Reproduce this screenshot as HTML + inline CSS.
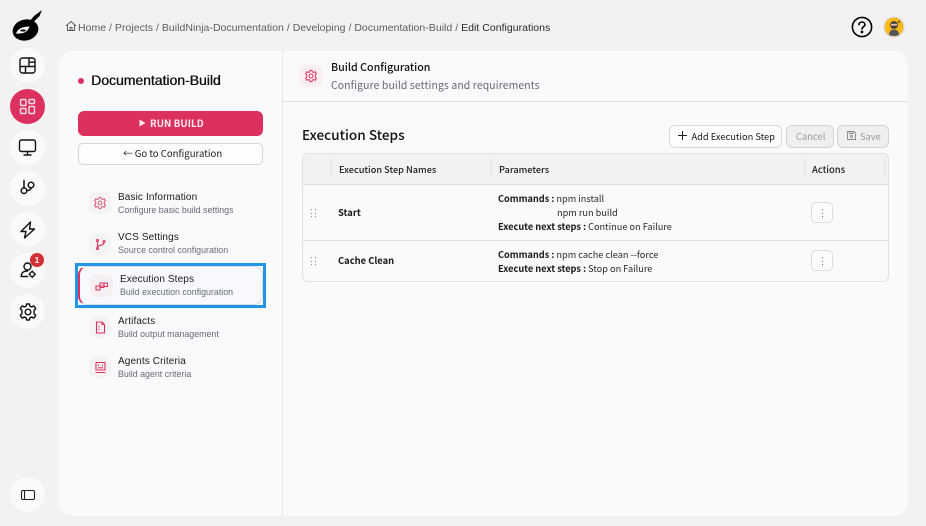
<!DOCTYPE html>
<html><head><meta charset="utf-8"><style>
*{box-sizing:border-box}
html,body{margin:0;padding:0}
body{width:926px;height:526px;background:#f3f1f2;position:relative;overflow:hidden;font-family:"Liberation Sans",sans-serif;color:#111}
.a{position:absolute;white-space:nowrap}
.n{font-family:"Noto Sans CJK SC","Liberation Sans",sans-serif}
.c{position:absolute;left:10px;width:35px;height:35px;border-radius:50%;background:#fbfafb;display:flex;align-items:center;justify-content:center}
.c svg{fill:none;stroke:#111;stroke-width:1.4;stroke-linecap:round;stroke-linejoin:round}
.ic{position:absolute;left:89px;width:22px;height:22px;border-radius:7px;background:#f5f2f4;display:flex;align-items:center;justify-content:center}
.ic svg{fill:none;stroke:#dc305e;stroke-width:1.1;stroke-linecap:round;stroke-linejoin:round}
.t{font-size:10px;color:#1a1a1a;letter-spacing:.12px}
.s{font-size:8.85px;color:#666b74}
.h{font-size:9.2px;color:#1c1c1c;font-weight:500;line-height:13px}
.r{font-size:9.2px;color:#2a2a2a;line-height:13px}
.r b{font-weight:700;color:#1a1a1a}
.vl{position:absolute;width:1px;background:#e4e2e3}
.more{position:absolute;left:811px;width:22px;height:21px;border:1px solid #dcdcdf;border-radius:5px;background:#fbfbfd}
.more i{position:absolute;left:9.5px;width:1.3px;height:1.3px;background:#666}
.dr i{position:absolute;width:1.2px;height:1.2px;background:#888}
</style></head><body>

<svg class="a" style="left:11px;top:8px" width="32" height="34" viewBox="0 0 32 34">
<path d="M18 14 L23 8 L31 2 L28.500 8 L22 14.500Z" fill="#000"/>
<ellipse cx="14.500" cy="22" rx="13" ry="10.500" fill="#000" transform="rotate(-15 14.500 22)"/>
<path d="M5 25.500 Q7.500 18.500 18.500 18.500 Q16 26.500 5 25.500Z" fill="#fff"/>
<ellipse cx="12" cy="22.500" rx="3" ry="1" fill="#000"/>
</svg>

<div class="c" style="top:48px"><svg width="19" height="19" viewBox="0 0 19 19"><rect x="2" y="2" width="15" height="15" rx="2.5"/><path d="M2 10.500H17M11 2V10.500M7.500 10.500V17M11 6.200H17"/></svg></div>
<div class="c" style="top:89px;background:#dc305e"><svg width="19" height="19" viewBox="0 0 19 19" style="stroke:#fbdfe7"><rect x="2.500" y="2.500" width="5.500" height="6" rx="1"/><rect x="11" y="2.500" width="5.500" height="4" rx="1"/><rect x="2.500" y="11.500" width="5.500" height="5" rx="1"/><rect x="11" y="9.500" width="5.500" height="7" rx="1"/></svg></div>
<div class="c" style="top:130px"><svg width="19" height="19" viewBox="0 0 19 19"><rect x="1.500" y="2" width="16" height="11.500" rx="2"/><path d="M9.500 13.500V17M6 17H13"/></svg></div>
<div class="c" style="top:171px"><svg width="19" height="19" viewBox="0 0 19 19" style="stroke-width:1.500"><circle cx="6" cy="11.700" r="2.800"/><circle cx="13" cy="6" r="2.800"/><path d="M6 8.900V1.500M13 8.800C13 11 10.500 11.500 8.800 11.700"/></svg></div>
<div class="c" style="top:212px"><svg width="20" height="20" viewBox="0 0 20 20"><path d="M12.500 2L3 11.500H8L6.500 18L16.500 9H11.500L12.500 2Z"/></svg></div>
<div class="c" style="top:253px"><svg width="20" height="20" viewBox="0 0 20 20"><circle cx="9.500" cy="5.500" r="3.500"/><path d="M3.200 15.500C3.200 12 5.500 10 9.500 10M3.200 15.500H9.500"/><circle cx="14.200" cy="13.200" r="2.300"/><path d="M14.200 10V10.700M14.200 15.800V16.400M11 13.200H11.700M16.800 13.200H17.400"/></svg></div>
<div class="a" style="left:30px;top:253px;width:14px;height:14px;border-radius:50%;background:#d32f35;color:#fff;font-size:8.500px;font-weight:700;text-align:center;line-height:14px">1</div>
<div class="c" style="top:294px"><svg width="20" height="20" viewBox="0 0 20 20"><circle cx="10" cy="10" r="2.800"/><path d="M8.600 2H11.400L11.900 4.200L13.800 5L15.800 3.800L17.800 6.600L16.100 8.100V11.900L17.800 13.400L15.800 16.200L13.800 15L11.900 15.800L11.400 18H8.600L8.100 15.800L6.200 15L4.200 16.200L2.200 13.400L3.900 11.900V8.100L2.200 6.600L4.200 3.800L6.200 5L8.100 4.200Z"/></svg></div>
<div class="c" style="top:477px"><svg width="16" height="16" viewBox="0 0 16 16" style="stroke-width:1.100;stroke:#222"><rect x="1.500" y="3.500" width="13" height="9" rx="1.500"/><path d="M4.500 3.500V12.500"/></svg></div>

<svg class="a" style="left:65px;top:20px" width="12" height="12" viewBox="0 0 12 12" fill="none" stroke="#555" stroke-width=".9"><path d="M1 6L6 1.500L11 6M2.500 5V10.500H9.500V5M5 10.500V7.500H7V10.500"/></svg>
<div class="a" style="left:78px;top:21px;font-size:10.500px;line-height:14px;color:#5c5c60;letter-spacing:.025px">Home / Projects / BuildNinja-Documentation / Developing / Documentation-Build / <span style="color:#2a2a2a">Edit Configurations</span></div>

<svg class="a" style="left:851px;top:16px" width="22" height="22" viewBox="0 0 22 22" fill="none" stroke="#000" stroke-width="1.600"><circle cx="11" cy="11" r="9.600"/><path d="M8 8.700C8 7 9.400 6 11 6S14 7 14 8.600C14 10.600 11 10.800 11 13" stroke-linecap="round"/><circle cx="11" cy="16" r=".6" fill="#000"/></svg>
<svg class="a" style="left:883px;top:16px" width="22" height="22" viewBox="0 0 22 22"><circle cx="11" cy="11" r="10.500" fill="#d9d6d2"/><circle cx="11" cy="11" r="9.300" fill="#fcb813"/><path d="M6 19C6.200 15 8.500 13.500 11 13.500S15.800 15 16 19C14 20.300 8 20.300 6 19Z" fill="#54565c"/><circle cx="11" cy="9" r="3.900" fill="#3c3d42"/><rect x="8" y="7.800" width="6" height="1.900" fill="#f3b9a0"/><path d="M14 6L17 4.500L16.500 7Z" fill="#3c3d42"/></svg>

<div class="a" style="left:59px;top:51px;width:849px;height:465px;border-radius:14px;background:#fafafc"></div>
<div class="a" style="left:282px;top:51px;width:1px;height:465px;background:#e6e5e7"></div>
<div class="a" style="left:283px;top:101px;width:625px;height:1px;background:#dfdfe1"></div>

<div class="a" style="left:78px;top:78px;width:6px;height:6px;border-radius:50%;background:#dc305e"></div>
<div class="a" style="left:91px;top:72px;font-size:14px;line-height:17px;font-weight:400;color:#111;letter-spacing:-.02px;text-shadow:.4px 0 0 #111">Documentation-Build</div>

<div class="a" style="left:78px;top:111px;width:185px;height:25px;border-radius:6px;background:#dc305e"></div>
<svg class="a" style="left:139px;top:119px" width="7" height="8"><path d="M0.500 0.500L6.500 4L0.500 7.500Z" fill="#fbe9ee"/></svg>
<div class="a n" style="left:150px;top:116px;font-size:9.700px;line-height:14px;font-weight:700;color:#fbeef2;letter-spacing:.1px">RUN BUILD</div>
<div class="a" style="left:78px;top:143px;width:185px;height:22px;border-radius:5px;background:#fdfdfe;border:1px solid #d6d6d8"></div>
<div class="a n" style="left:123px;top:146px;font-size:9.600px;line-height:14px;color:#1a1a1a">← Go to Configuration</div>

<div class="ic" style="top:192px"><svg width="14" height="14" viewBox="0 0 20 20"><circle cx="10" cy="10" r="2.800"/><path d="M8.600 2H11.400L11.900 4.200L13.800 5L15.800 3.800L17.800 6.600L16.100 8.100V11.900L17.800 13.400L15.800 16.200L13.800 15L11.900 15.800L11.400 18H8.600L8.100 15.800L6.200 15L4.200 16.200L2.200 13.400L3.900 11.900V8.100L2.200 6.600L4.200 3.800L6.200 5L8.100 4.200Z"/></svg></div>
<div class="a t" style="left:118px;top:191px;line-height:13px">Basic Information</div>
<div class="a s" style="left:118px;top:204px;line-height:12px">Configure basic build settings</div>

<div class="ic" style="top:233px"><svg width="13" height="13" viewBox="0 0 13 13"><circle cx="3.500" cy="2.500" r="1"/><circle cx="3.500" cy="10.500" r="1"/><circle cx="10" cy="3.500" r="1"/><path d="M3.500 3.500V9.500M10 4.500C10 7 6 7 3.500 8.500"/></svg></div>
<div class="a t" style="left:118px;top:231px;line-height:13px">VCS Settings</div>
<div class="a s" style="left:118px;top:244px;line-height:12px">Source control configuration</div>

<div class="a" style="left:75px;top:263px;width:191px;height:45px;border:3px solid #2196e8"></div>
<div class="a" style="left:78px;top:266px;width:185px;height:39px;border-radius:9px;background:#f8f9fc;border:1px solid #dcdde3;border-left:2px solid #dc305e"></div>
<div class="ic" style="left:90px;top:274px;width:23px;height:23px;background:#f6eff3"><svg width="13" height="13" viewBox="0 0 13 13"><path d="M1 7H5V11H1ZM5 7H9V4H5ZM5 7V4M9 4H12.500V7.500H9V4M5 8.500H9"/></svg></div>
<div class="a t" style="left:120px;top:273px;line-height:13px">Execution Steps</div>
<div class="a s" style="left:120px;top:286px;line-height:12px">Build execution configuration</div>

<div class="ic" style="top:316px"><svg width="13" height="13" viewBox="0 0 13 13"><path d="M2.500 1H8L10.500 3.500V12H2.500ZM8 1V3.500H10.500M5 5V5.800M5 8V8.800"/></svg></div>
<div class="a t" style="left:118px;top:315px;line-height:13px">Artifacts</div>
<div class="a s" style="left:118px;top:328px;line-height:12px">Build output management</div>

<div class="ic" style="top:356px"><svg width="13" height="13" viewBox="0 0 13 13"><path d="M2 1.500H11V9H2ZM2 11.500H11M4.500 4V4.600M8.500 4V4.600M4.500 6.800H8.500"/></svg></div>
<div class="a t" style="left:118px;top:355px;line-height:13px">Agents Criteria</div>
<div class="a s" style="left:118px;top:368px;line-height:12px">Build agent criteria</div>

<div class="a" style="left:299px;top:65px;width:23px;height:22px;border-radius:7px;background:#faeef2;display:flex;align-items:center;justify-content:center"><svg width="14" height="14" viewBox="0 0 20 20" fill="none" stroke="#dc305e" stroke-width="1.400"><circle cx="10" cy="10" r="2.800"/><path d="M8.600 2H11.400L11.900 4.200L13.800 5L15.800 3.800L17.800 6.600L16.100 8.100V11.900L17.800 13.400L15.800 16.200L13.800 15L11.900 15.800L11.400 18H8.600L8.100 15.800L6.200 15L4.200 16.200L2.200 13.400L3.900 11.900V8.100L2.200 6.600L4.200 3.800L6.200 5L8.100 4.200Z"/></svg></div>
<div class="a n" style="left:331px;top:60px;font-size:10.700px;line-height:15px;font-weight:500;color:#111">Build Configuration</div>
<div class="a n" style="left:331px;top:78px;font-size:10.450px;line-height:15px;color:#646870;letter-spacing:.1px">Configure build settings and requirements</div>

<div class="a n" style="left:302px;top:125px;font-size:13.600px;line-height:18px;font-weight:500;color:#111">Execution Steps</div>

<div class="a" style="left:669px;top:125px;width:113px;height:23px;border:1px solid #d9d9dc;border-radius:6px;background:#fdfdfe"></div>
<svg class="a" style="left:678px;top:131px" width="9" height="9"><path d="M4.500 0V9M0 4.500H9" stroke="#222" stroke-width="1"/></svg>
<div class="a n" style="left:691.500px;top:129px;font-size:9.300px;line-height:15px;color:#1a1a1a">Add Execution Step</div>
<div class="a" style="left:786px;top:125px;width:48px;height:23px;border:1px solid #d2d3d5;border-radius:6px;background:#eeeff0"></div>
<div class="a n" style="left:796px;top:129px;font-size:9.400px;line-height:15px;color:#999b9e">Cancel</div>
<div class="a" style="left:837px;top:125px;width:52px;height:23px;border:1px solid #d2d3d5;border-radius:6px;background:#eeeff0"></div>
<svg class="a" style="left:847px;top:131px" width="9" height="9" viewBox="0 0 9 9" fill="none" stroke="#888" stroke-width=".9"><path d="M.5.500H7L8.500 2V8.500H.5ZM2.500.5V2.500H6V.5"/><circle cx="4.500" cy="5.500" r="1.100"/></svg>
<div class="a n" style="left:860px;top:129px;font-size:9.300px;line-height:15px;color:#999b9e">Save</div>

<div class="a" style="left:302px;top:153px;width:587px;height:129px;border:1px solid #e0e0e2;border-radius:6px;background:#fafafc;overflow:hidden">
 <div class="a" style="left:0;top:0;width:585px;height:31px;background:#f3f1f2;border-bottom:1px solid #dfdfe1"></div>
 <div class="a" style="left:0;top:86px;width:585px;height:1px;background:#e2e2e4"></div>
</div>
<div class="vl" style="left:331px;top:159px;height:19px"></div>
<div class="vl" style="left:491px;top:159px;height:19px"></div>
<div class="vl" style="left:804px;top:159px;height:19px"></div>
<div class="vl" style="left:884px;top:159px;height:19px"></div>
<div class="a n h" style="left:339px;top:163px">Execution Step Names</div>
<div class="a n h" style="left:499px;top:163px">Parameters</div>
<div class="a n h" style="left:812px;top:163px;font-size:9.400px">Actions</div>

<div class="a dr" style="left:311px;top:209px;width:8px;height:9px"><i style="left:0;top:0"></i><i style="left:4px;top:0"></i><i style="left:0;top:3.500px"></i><i style="left:4px;top:3.500px"></i><i style="left:0;top:7px"></i><i style="left:4px;top:7px"></i></div>
<div class="a dr" style="left:311px;top:257px;width:8px;height:9px"><i style="left:0;top:0"></i><i style="left:4px;top:0"></i><i style="left:0;top:3.500px"></i><i style="left:4px;top:3.500px"></i><i style="left:0;top:7px"></i><i style="left:4px;top:7px"></i></div>

<div class="a n" style="left:338px;top:206px;font-size:9.400px;line-height:13px;font-weight:700;color:#1a1a1a">Start</div>
<div class="a n" style="left:338px;top:254px;font-size:9.400px;line-height:13px;font-weight:700;color:#1a1a1a">Cache Clean</div>

<div class="a n r" style="left:498px;top:192px"><b>Commands :</b> npm install</div>
<div class="a n r" style="left:557px;top:206px">npm run build</div>
<div class="a n r" style="left:498px;top:220px"><b>Execute next steps :</b> Continue on Failure</div>
<div class="a n r" style="left:498px;top:248px"><b>Commands :</b> npm cache clean --force</div>
<div class="a n r" style="left:498px;top:262px"><b>Execute next steps :</b> Stop on Failure</div>

<div class="more" style="top:202px"><i style="top:6px"></i><i style="top:9.500px"></i><i style="top:13px"></i></div>
<div class="more" style="top:250px"><i style="top:6px"></i><i style="top:9.500px"></i><i style="top:13px"></i></div>

</body></html>
